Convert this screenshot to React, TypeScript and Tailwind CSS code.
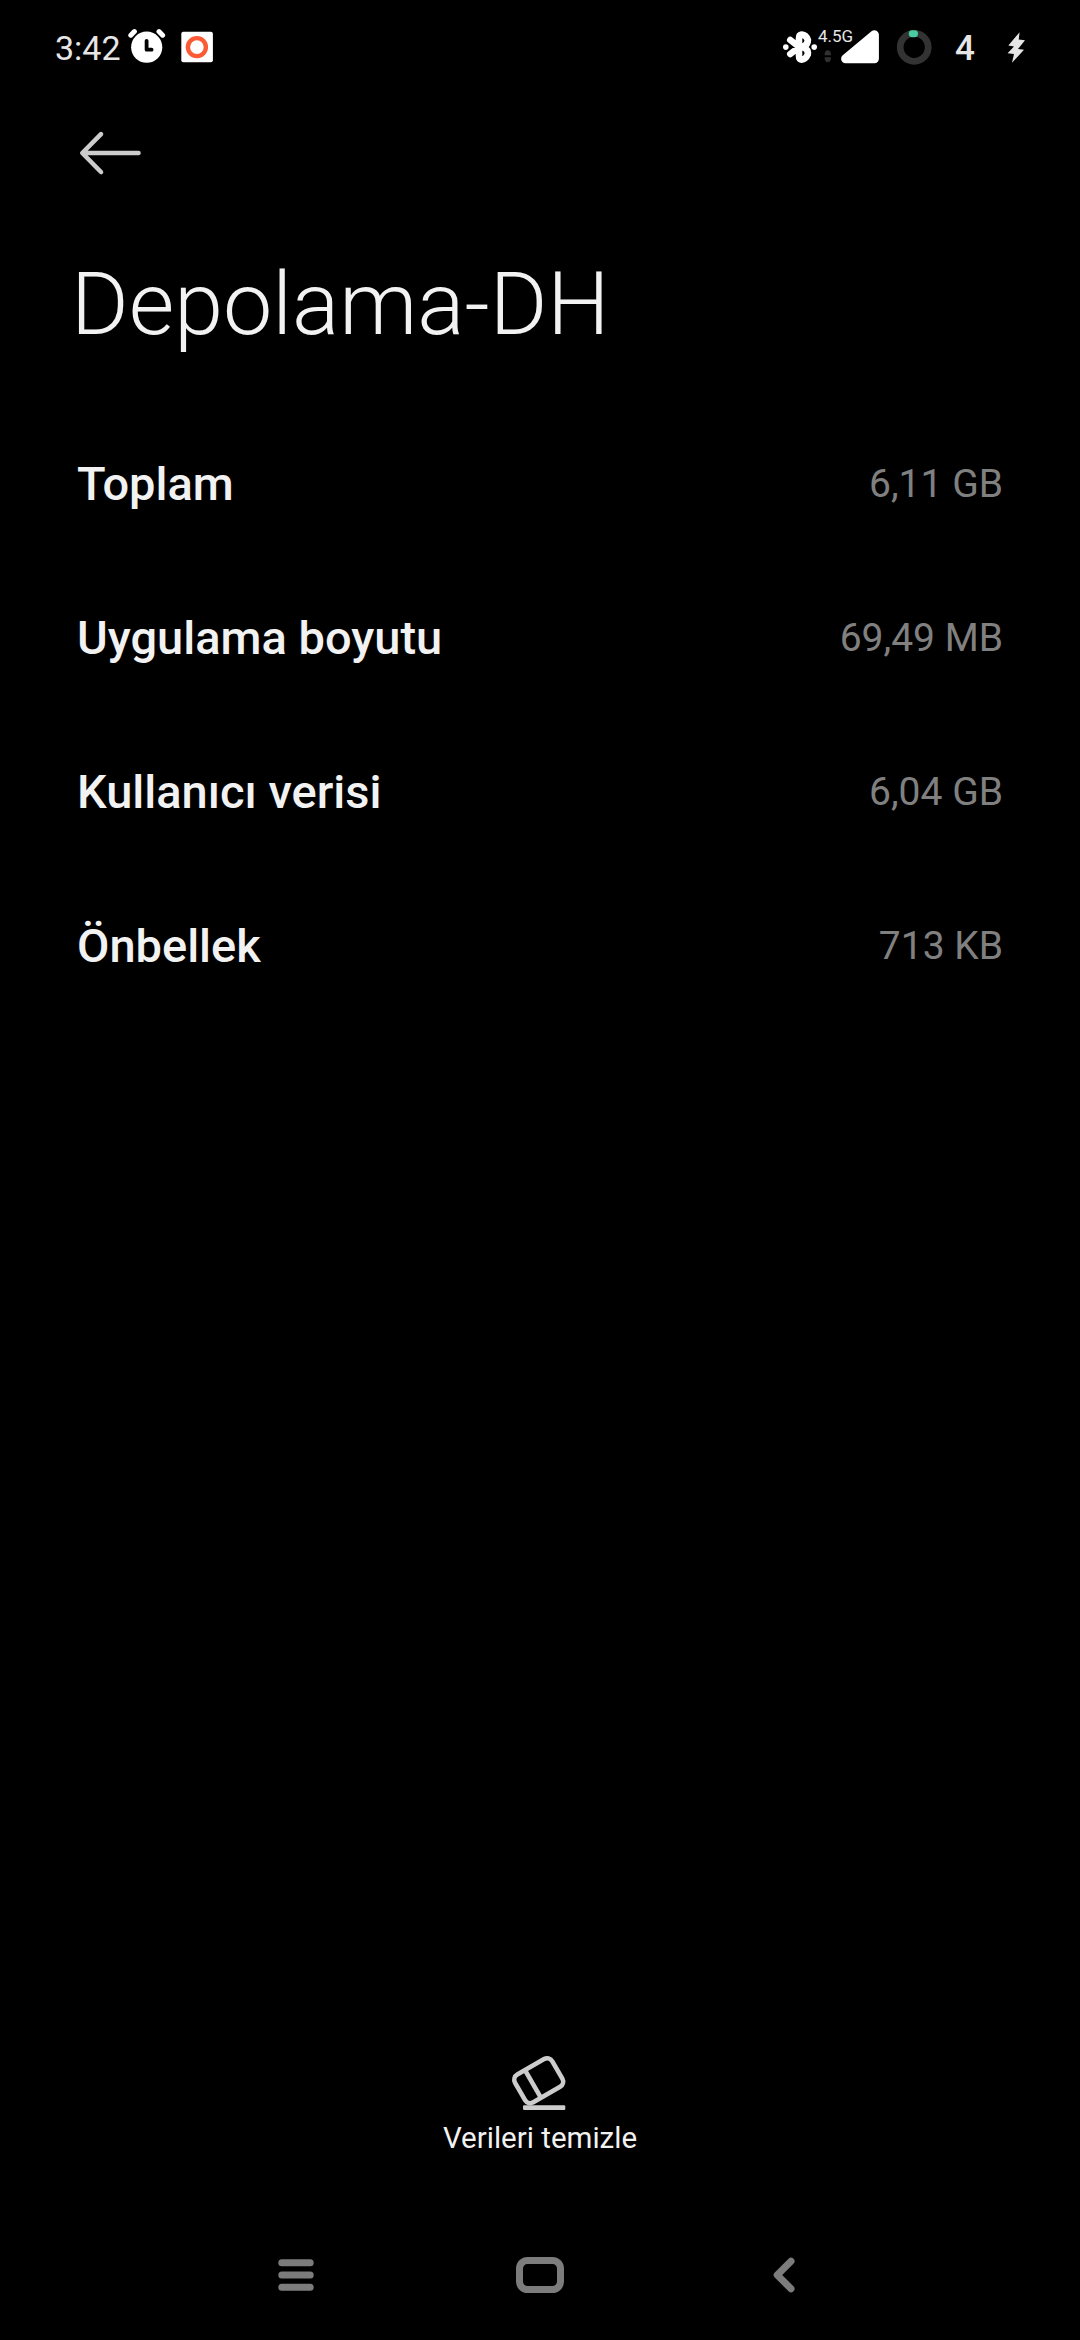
const rows = [
  { label: 'Toplam', value: '6,11 GB' },
  { label: 'Uygulama boyutu', value: '69,49 MB' },
  { label: 'Kullanıcı verisi', value: '6,04 GB' },
  { label: 'Önbellek', value: '713 KB' },
];

function StatusBar() {
  return (
    <header className="flex h-24 items-center pl-[55px] text-[#e6e6e6]">
      <span className="w-[73px] text-[34px] leading-[48px]">3:42</span>
      <svg className="h-24 w-10" viewBox="128 0 40 96" fill="none">
        <circle cx="146.7" cy="47.2" r="15.6" fill="#fff" />
        <path d="M130.8 35.2l3.6-3.6M162.6 35.2l-3.6-3.6" stroke="#fff" strokeWidth="5" strokeLinecap="round" />
        <path d="M146.6 40.8v8.9h5" stroke="#000" strokeWidth="3.8" strokeLinecap="round" strokeLinejoin="round" />
      </svg>
      <svg className="ml-3 h-24 w-9" viewBox="180 0 36 96" fill="none">
        <rect x="181.3" y="31.8" width="31.6" height="30.4" rx="2" fill="#fff" />
        <circle cx="196.9" cy="47.1" r="9" stroke="#fb5a34" strokeWidth="4.4" />
      </svg>
      <div className="ml-auto flex h-24 items-start">
        <svg className="h-24 w-[38px]" viewBox="780 0 38 96" fill="none">
          <path
            d="M790.3 40L799.2 47H803.2Q808.6 49.6 807.8 54.5Q805.6 59.4 801.6 59.6Q799 59.4 799 56V38Q799 34.8 801.6 34.5Q806.4 35 807.9 40Q808 44.4 803.2 47H799.2L790.3 54"
            stroke="#fff"
            strokeWidth="6.6"
            strokeLinecap="round"
            strokeLinejoin="round"
          />
          <circle cx="785.8" cy="47.1" r="2.8" fill="#fff" />
          <circle cx="814.2" cy="47.1" r="2.8" fill="#fff" />
        </svg>
        <div className="flex w-[22px] flex-col pt-[26px]">
          <span className="text-[17px] leading-5 whitespace-nowrap">4.5G</span>
          <svg className="mt-[3px] ml-[6px] h-4 w-2" viewBox="824 49 8 16" fill="#303030">
            <path d="M824.6 55.2q0-5 3.2-5t3.2 5zM824.6 57.2q0 5 3.2 5t3.2-5z" />
          </svg>
        </div>
        <svg className="h-24 w-10" viewBox="840 0 40 96">
          <path d="M874.4 34.8V58.8H845.6z" fill="#fff" stroke="#fff" strokeWidth="9" strokeLinejoin="round" />
        </svg>
        <svg className="ml-4 h-24 w-9" viewBox="896 0 36 96" fill="none">
          <circle cx="914.2" cy="47.3" r="14" stroke="#333" strokeWidth="6.7" />
          <rect x="908.8" y="30.2" width="9.2" height="7" rx="3.4" fill="#48cba2" />
        </svg>
        <span className="ml-[23px] w-[45px] pt-[24px] text-[35px] leading-[50px] font-medium">4</span>
        <svg className="mr-12 h-24 w-8" viewBox="1000 0 32 96" fill="#e6e6e6">
          <path d="M1019.6 32.2L1008.3 45.6L1014 46.5L1007.6 53.3L1014 54L1012 62.8L1024 49.8L1018 49L1025 40.2L1018.7 39.6z" />
        </svg>
      </div>
    </header>
  );
}

function NavBar() {
  return (
    <nav className="flex h-[130px] items-center justify-between px-[272px]">
      <svg className="h-12 w-12" viewBox="272 2251 48 48" fill="none" stroke="#7c7c7c" strokeWidth="7" strokeLinecap="round">
        <path d="M281.8 2262.8h28.4M281.8 2275h28.4M281.8 2287.2h28.4" />
      </svg>
      <svg className="h-12 w-[52px]" viewBox="514 2251 52 48" fill="none" stroke="#7c7c7c" strokeWidth="7">
        <rect x="519.5" y="2260.5" width="41" height="29" rx="8" />
      </svg>
      <svg className="h-12 w-12" viewBox="760 2251 48 48" fill="none" stroke="#7c7c7c" strokeWidth="7" strokeLinecap="round" strokeLinejoin="round">
        <path d="M791 2261.2L777.2 2275L791 2288.8" />
      </svg>
    </nav>
  );
}

export default function App() {
  return (
    <div className="flex h-[2340px] w-[1080px] flex-col overflow-hidden bg-black font-['Roboto',sans-serif]">
      <StatusBar />
      <div className="flex h-[114px] items-center pl-[72px]">
        <svg className="h-[72px] w-[72px]" viewBox="72 117 72 72" fill="none" stroke="#cccccc" strokeWidth="4.6" strokeLinecap="round" strokeLinejoin="round">
          <path d="M138.5 153H82.5M101 134.2L82.3 153L101 172" />
        </svg>
      </div>
      <h1 className="mt-11 pl-[71px] text-[88px] leading-[100px] font-light text-[#f2f2f2]">Depolama-DH</h1>
      <ul className="mt-[53px] px-[77px]">
        {rows.map((row) => (
          <li key={row.label} className="flex h-[154px] items-center justify-between">
            <span className="text-[47px] leading-[60px] font-medium text-[#f2f2f2]">{row.label}</span>
            <span className="text-[39px] leading-[50px] text-[#808080]">{row.value}</span>
          </li>
        ))}
      </ul>
      <div className="mt-auto flex flex-col items-center pb-[52px]">
        <svg className="h-[72px] w-[72px]" viewBox="504 2046 72 72" fill="none" stroke="#cccccc" strokeWidth="4.6">
          <g transform="translate(538.7 2080.7) rotate(-30)">
            <rect x="-21.5" y="-16" width="43" height="32" rx="6" />
            <path d="M-6.6-16v32" />
          </g>
          <rect x="523" y="2105.3" width="42.3" height="4.7" rx="1.2" fill="#cccccc" stroke="none" />
        </svg>
        <span className="text-[29.5px] leading-10 text-[#f2f2f2]">Verileri temizle</span>
      </div>
      <NavBar />
    </div>
  );
}
